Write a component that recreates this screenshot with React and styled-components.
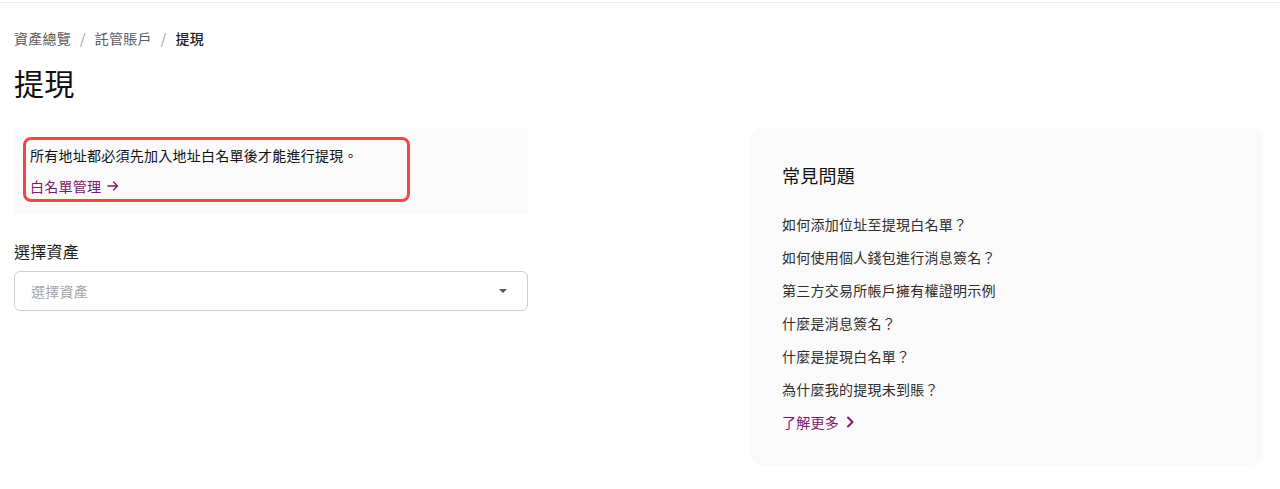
import React from 'react';
import styled, { createGlobalStyle } from 'styled-components';

const GlobalStyle = createGlobalStyle`
  html, body {
    margin: 0;
    padding: 0;
    background: #ffffff;
    font-family: "Noto Sans CJK TC", "Noto Sans", sans-serif;
    color: #1e1e1e;
  }
  * { box-sizing: border-box; }
`;

const TopBar = styled.div`
  height: 3px;
  border-bottom: 1px solid #ececec;
`;

const Page = styled.div`
  padding: 0 17px 0 14px;
  letter-spacing: 0.25px;
`;

const Breadcrumb = styled.nav`
  display: flex;
  align-items: center;
  gap: 9px;
  margin-top: 24px;
  height: 22px;
  font-size: 14px;
  line-height: 22px;
`;

const Crumb = styled.span`
  color: ${({ $current }) => ($current ? '#1e1e1e' : '#5c5c5c')};
  font-weight: ${({ $current }) => ($current ? 500 : 400)};
`;

const Sep = styled.span`
  color: #9a9a9a;
`;

const Title = styled.h1`
  margin: 13px 0 0;
  font-size: 30px;
  line-height: 40px;
  font-weight: 400;
  color: #111;
`;

const Columns = styled.div`
  display: flex;
  justify-content: space-between;
  align-items: flex-start;
  margin-top: 26px;
`;

const LeftCol = styled.div`
  width: 514px;
`;

const Notice = styled.div`
  background: #fafafa;
  padding: 9px 9px 13px;
`;

const Highlight = styled.div`
  width: 387px;
  border: 3px solid #f04848;
  border-radius: 8px;
  padding: 4px 4px 2px;
  display: flex;
  flex-direction: column;
  gap: 9px;
`;

const NoticeText = styled.p`
  margin: 0;
  font-size: 14px;
  line-height: 22px;
  color: #111;
`;

const PurpleLink = styled.a`
  display: inline-flex;
  align-items: center;
  gap: 6px;
  font-size: 14px;
  line-height: 22px;
  color: #7a1b6c;
  text-decoration: none;
`;

const Field = styled.div`
  margin-top: 24px;
  display: flex;
  flex-direction: column;
  gap: 8px;
`;

const Label = styled.label`
  font-size: 16px;
  line-height: 24px;
  color: #1e1e1e;
`;

const Select = styled.div`
  height: 40px;
  border: 1px solid #cfcfcf;
  border-radius: 6px;
  display: flex;
  align-items: center;
  justify-content: space-between;
  padding: 0 20px 0 16px;
  font-size: 14px;
  color: #a6a6a6;
`;

const Caret = styled.span`
  width: 0;
  height: 0;
  border-left: 4.5px solid transparent;
  border-right: 4.5px solid transparent;
  border-top: 4.5px solid #55535e;
`;

const FaqPanel = styled.aside`
  width: 513px;
  background: #fafafa;
  border-radius: 12px;
  padding: 33px 32px 32px;
`;

const FaqTitle = styled.h2`
  margin: 0 0 24px;
  font-size: 18px;
  line-height: 28px;
  font-weight: 400;
  color: #111;
`;

const FaqList = styled.ul`
  list-style: none;
  margin: 0;
  padding: 0;
  display: flex;
  flex-direction: column;
  gap: 11px;
`;

const FaqItem = styled.li`
  font-size: 14px;
  line-height: 22px;
  color: #2e2e2e;
`;

const questions = [
  '如何添加位址至提現白名單？',
  '如何使用個人錢包進行消息簽名？',
  '第三方交易所帳戶擁有權證明示例',
  '什麼是消息簽名？',
  '什麼是提現白名單？',
  '為什麼我的提現未到賬？',
];

function ArrowRight() {
  return (
    <svg width="12" height="12" viewBox="0 0 12 12" fill="none">
      <path d="M1 6h9.5M6.5 2l4 4-4 4" stroke="currentColor" strokeWidth="1.4" strokeLinecap="round" strokeLinejoin="round" />
    </svg>
  );
}

function Chevron() {
  return (
    <svg width="10" height="12" viewBox="0 0 10 12" fill="none">
      <path d="M3 1.5l4.5 4.5L3 10.5" stroke="currentColor" strokeWidth="2" strokeLinecap="round" strokeLinejoin="round" />
    </svg>
  );
}

export default function App() {
  return (
    <>
      <GlobalStyle />
      <TopBar />
      <Page>
        <Breadcrumb>
          <Crumb>資產總覽</Crumb>
          <Sep>/</Sep>
          <Crumb>託管賬戶</Crumb>
          <Sep>/</Sep>
          <Crumb $current>提現</Crumb>
        </Breadcrumb>
        <Title>提現</Title>
        <Columns>
          <LeftCol>
            <Notice>
              <Highlight>
                <NoticeText>所有地址都必須先加入地址白名單後才能進行提現。</NoticeText>
                <PurpleLink href="#">
                  白名單管理 <ArrowRight />
                </PurpleLink>
              </Highlight>
            </Notice>
            <Field>
              <Label>選擇資產</Label>
              <Select>
                <span>選擇資產</span>
                <Caret />
              </Select>
            </Field>
          </LeftCol>
          <FaqPanel>
            <FaqTitle>常見問題</FaqTitle>
            <FaqList>
              {questions.map((q) => (
                <FaqItem key={q}>{q}</FaqItem>
              ))}
              <FaqItem>
                <PurpleLink href="#">
                  了解更多 <Chevron />
                </PurpleLink>
              </FaqItem>
            </FaqList>
          </FaqPanel>
        </Columns>
      </Page>
    </>
  );
}
